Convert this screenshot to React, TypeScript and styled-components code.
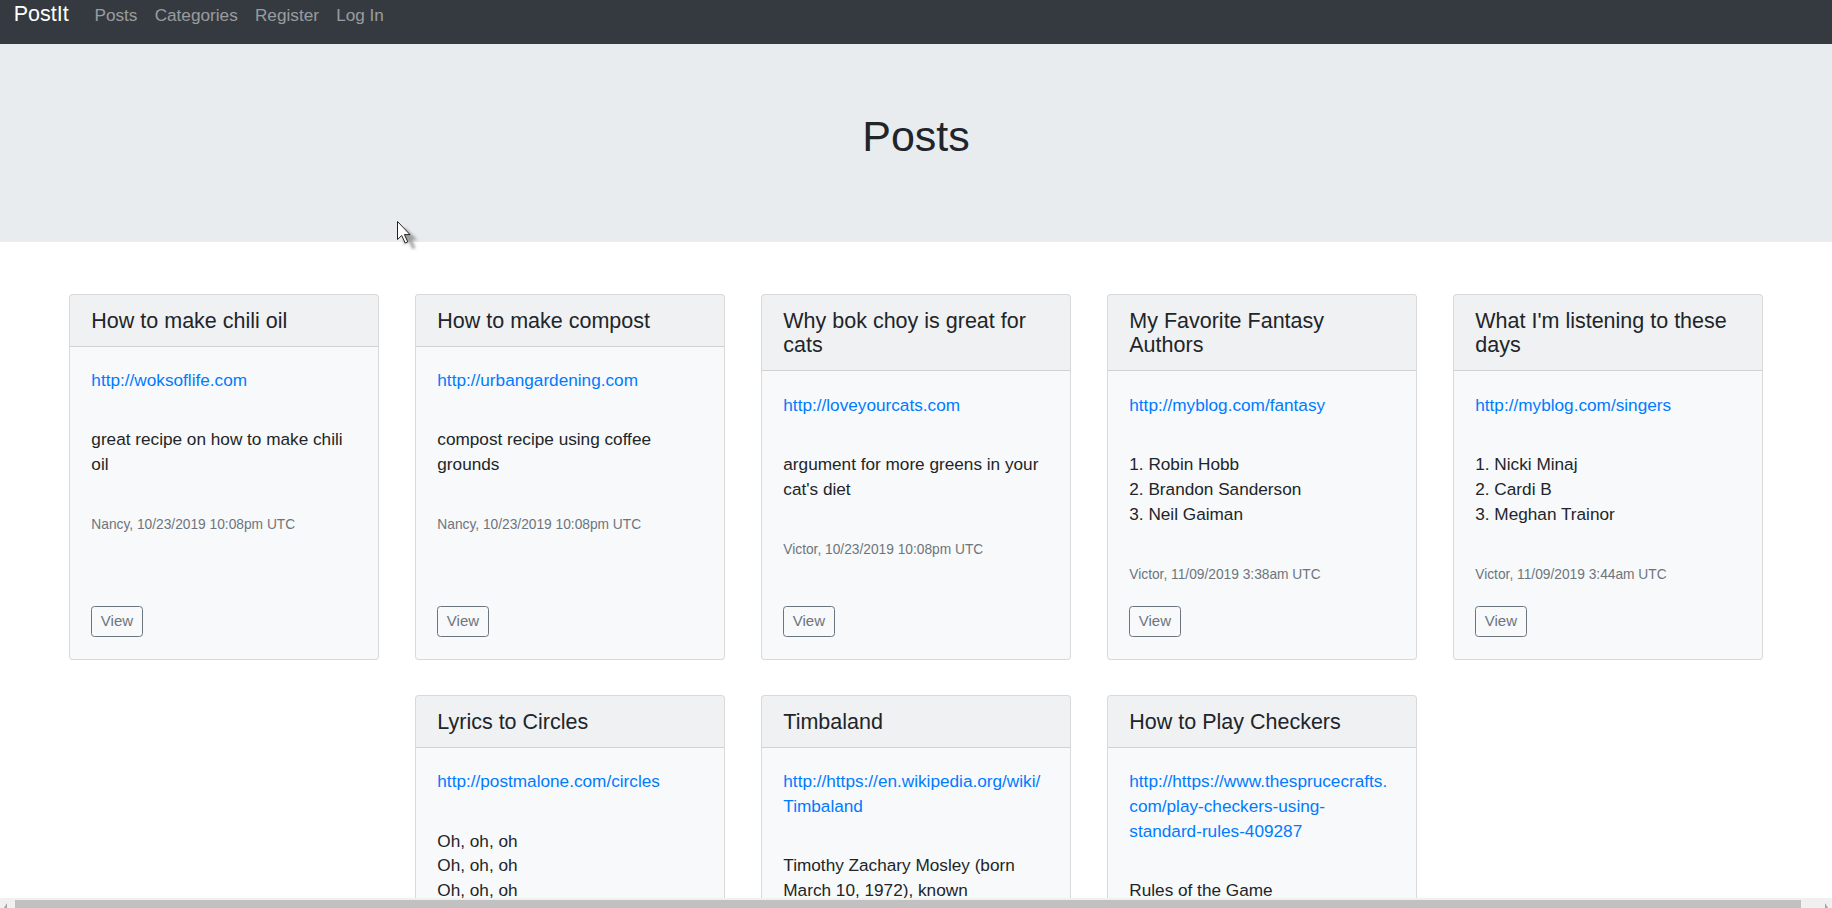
import React from 'react';
import styled, { createGlobalStyle } from 'styled-components';

type Post = {
  title: string;
  url: string;
  body: string;
  author: string;
  date: string;
};

const posts: Post[] = [
  {
    title: 'How to make chili oil',
    url: 'http://woksoflife.com',
    body: 'great recipe on how to make chili oil',
    author: 'Nancy',
    date: '10/23/2019 10:08pm UTC',
  },
  {
    title: 'How to make compost',
    url: 'http://urbangardening.com',
    body: 'compost recipe using coffee grounds',
    author: 'Nancy',
    date: '10/23/2019 10:08pm UTC',
  },
  {
    title: 'Why bok choy is great for cats',
    url: 'http://loveyourcats.com',
    body: "argument for more greens in your cat's diet",
    author: 'Victor',
    date: '10/23/2019 10:08pm UTC',
  },
  {
    title: 'My Favorite Fantasy Authors',
    url: 'http://myblog.com/fantasy',
    body: '1. Robin Hobb\n2. Brandon Sanderson\n3. Neil Gaiman',
    author: 'Victor',
    date: '11/09/2019 3:38am UTC',
  },
  {
    title: "What I'm listening to these days",
    url: 'http://myblog.com/singers',
    body: '1. Nicki Minaj\n2. Cardi B\n3. Meghan Trainor',
    author: 'Victor',
    date: '11/09/2019 3:44am UTC',
  },
  {
    title: 'Lyrics to Circles',
    url: 'http://postmalone.com/circles',
    body: "Oh, oh, oh\nOh, oh, oh\nOh, oh, oh\nOh, oh, oh\nWe couldn't turn around",
    author: 'Nancy',
    date: '11/09/2019 3:50am UTC',
  },
  {
    title: 'Timbaland',
    url: 'http://https://en.wikipedia.org/wiki/Timbaland',
    body: 'Timothy Zachary Mosley (born March 10, 1972), known professionally as Timbaland, is an American record producer.',
    author: 'Victor',
    date: '11/09/2019 3:52am UTC',
  },
  {
    title: 'How to Play Checkers',
    url: 'http://https://www.thesprucecrafts.com/play-checkers-using-standard-rules-409287',
    body: 'Rules of the Game\nCheckers is played by two players.',
    author: 'Nancy',
    date: '11/09/2019 3:55am UTC',
  },
];

const GlobalStyle = createGlobalStyle`
  html, body {
    margin: 0;
    padding: 0;
    overflow: hidden;
    background: #fff;
  }
  body {
    font-family: "Liberation Sans", Arial, sans-serif;
    font-size: 17.2px;
    line-height: 24.75px;
    color: #212529;
  }
  * {
    box-sizing: border-box;
  }
`;

const Navbar = styled.nav`
  display: flex;
  align-items: baseline;
  height: 44px;
  padding-left: 13.7px;
  background: #343a40;
`;

const Brand = styled.a`
  margin-top: -2.5px;
  margin-right: 17.2px;
  font-size: 21.5px;
  line-height: 32px;
  color: #fff;
  text-decoration: none;
`;

const NavLink = styled.a`
  padding: 0 8.6px;
  color: rgba(255, 255, 255, 0.5);
  text-decoration: none;
`;

const Jumbotron = styled.header`
  height: 198px;
  padding-top: 67px;
  background: #e9ecef;
  text-align: center;
`;

const PageTitle = styled.h1`
  margin: 0;
  font-size: 43px;
  line-height: 51.6px;
  font-weight: 400;
`;

const CardGrid = styled.main`
  display: flex;
  flex-wrap: wrap;
  justify-content: center;
  gap: 35.7px 35.6px;
  margin-top: 52.3px;
`;

const Card = styled.article`
  display: flex;
  flex-direction: column;
  width: 310.4px;
  background: #f8f9fa;
  border: 1px solid rgba(0, 0, 0, 0.125);
  border-radius: 4px;
  overflow: hidden;
`;

const CardHeader = styled.div`
  padding: 13.4px 21.5px 12.4px;
  background: rgba(0, 0, 0, 0.03);
  border-bottom: 1px solid rgba(0, 0, 0, 0.125);
`;

const CardTitle = styled.h5`
  margin: 0;
  font-size: 21.5px;
  line-height: 24.7px;
  font-weight: 400;
`;

const CardBody = styled.div`
  display: flex;
  flex: 1;
  flex-direction: column;
  padding: 21.5px;
`;

const PostLink = styled.a`
  display: block;
  margin-bottom: 34.4px;
  color: #007bff;
  text-decoration: none;
  overflow-wrap: break-word;
`;

const PostText = styled.p`
  margin: 0 0 34.4px;
  white-space: pre-line;
`;

const Meta = styled.p`
  margin: 0 0 18.7px;

  small {
    font-size: 13.76px;
    color: #6c757d;
  }
`;

const ViewButton = styled.button`
  align-self: flex-start;
  margin-top: auto;
  padding: 0 8.5px 2px;
  font-family: inherit;
  font-size: 15px;
  line-height: 27px;
  color: #6c757d;
  background: transparent;
  border: 1px solid #6c757d;
  border-radius: 3.5px;
`;

const Pointer = styled.svg`
  position: fixed;
  left: 396.8px;
  top: 221.2px;
  width: 28px;
  height: 34px;
  pointer-events: none;
`;

const Scrollbar = styled.div`
  position: fixed;
  left: 0;
  right: 0;
  bottom: 0;
  display: flex;
  align-items: flex-end;
  height: 10.3px;
  background: #f0f0f0;
`;

const ScrollButton = styled.div<{ $side: 'left' | 'right' }>`
  position: relative;
  width: ${({ $side }) => ($side === 'left' ? '15px' : '31px')};
  height: 100%;

  &::after {
    content: '';
    position: absolute;
    bottom: 0;
    ${({ $side }) => ($side === 'left' ? 'left: 4px;' : 'right: 4px;')}
    border-bottom: 5px solid #a3a3a3;
    ${({ $side }) =>
      $side === 'left'
        ? 'border-left: 3px solid transparent;'
        : 'border-right: 3px solid transparent;'}
  }
`;

const ScrollThumb = styled.div`
  flex: 1;
  height: 8.3px;
  background: #c1c1c1;
`;

function PostCard({ post }: { post: Post }) {
  return (
    <Card>
      <CardHeader>
        <CardTitle>{post.title}</CardTitle>
      </CardHeader>
      <CardBody>
        <PostLink href={post.url}>{post.url}</PostLink>
        <PostText>{post.body}</PostText>
        <Meta>
          <small>
            {post.author}, {post.date}
          </small>
        </Meta>
        <ViewButton>View</ViewButton>
      </CardBody>
    </Card>
  );
}

export default function App() {
  return (
    <>
      <GlobalStyle />
      <Navbar>
        <Brand href="#">PostIt</Brand>
        <NavLink href="#">Posts</NavLink>
        <NavLink href="#">Categories</NavLink>
        <NavLink href="#">Register</NavLink>
        <NavLink href="#">Log In</NavLink>
      </Navbar>
      <Jumbotron>
        <PageTitle>Posts</PageTitle>
      </Jumbotron>
      <CardGrid>
        {posts.map((post) => (
          <PostCard key={post.title} post={post} />
        ))}
      </CardGrid>
      <Pointer viewBox="0 0 28 34">
        <defs>
          <filter id="pointer-shadow" x="-50%" y="-50%" width="200%" height="200%">
            <feGaussianBlur stdDeviation="1.8" />
          </filter>
        </defs>
        <path
          d="M7 6 L7 24 L11.5 20 L15.5 28 L18.5 27 L14.8 19 L20.5 19 Z"
          fill="#8f8f8f"
          opacity="0.85"
          filter="url(#pointer-shadow)"
        />
        <path
          d="M0.5 0.5 L0.5 18.5 L4.7 14.5 L8.2 22 L10.8 20.9 L7.4 13.6 L13 13.6 Z"
          fill="#fff"
          stroke="#222"
          strokeWidth="1"
          strokeLinejoin="miter"
        />
      </Pointer>
      <Scrollbar>
        <ScrollButton $side="left" />
        <ScrollThumb />
        <ScrollButton $side="right" />
      </Scrollbar>
    </>
  );
}
